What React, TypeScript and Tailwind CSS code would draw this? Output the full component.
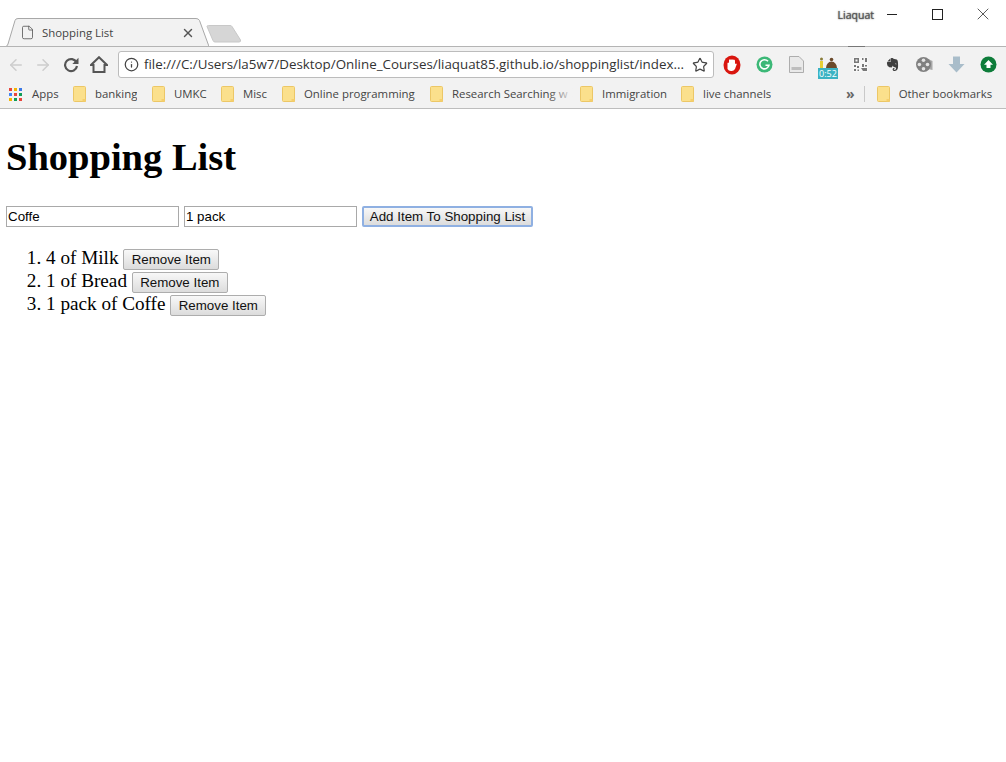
import { useState } from "react";
import { ArrowLeft, ArrowRight, Info, Star, X, File } from "lucide-react";
import { FaEvernote } from "react-icons/fa";

const bookmarks = [
  { label: "banking", width: "w-[79px]" },
  { label: "UMKC", width: "w-[69px]" },
  { label: "Misc", width: "w-[61px]" },
  { label: "Online programming", width: "w-[148px]" },
  { label: "Research Searching w", width: "w-[150px]", faded: true },
  { label: "Immigration", width: "w-[101px]" },
  { label: "live channels", width: "w-[169px]" },
];

const appColors = ["bg-[#e8453c]", "bg-[#f4b400]", "bg-[#3b78e7]", "bg-[#4285f4]", "bg-[#e8453c]", "bg-[#0f9d58]", "bg-[#f4b400]", "bg-[#0f9d58]", "bg-[#e8453c]"];

function Folder() {
  return (
    <svg width="13" height="16" viewBox="0 0 13 16" className="shrink-0">
      <path d="M0.5 1.5 Q0.5 0.5 1.5 0.5 H11.5 Q12.5 0.5 12.5 1.5 V15.5 H1.5 Q0.5 15.5 0.5 14.5 Z" fill="#fbe08c" stroke="#ecc766" />
      <path d="M9.5 13 H12.5 V15.5 H9.5 Z" fill="#f6cf6c" />
    </svg>
  );
}

function ExtensionIcons() {
  return (
    <div className="flex items-center">
      {/* opera-like blocker */}
      <div className="w-8 h-6 flex items-center justify-center">
        <svg width="18" height="20" viewBox="0 0 18 20">
          <ellipse cx="9" cy="10" rx="8.5" ry="9.5" fill="#d9160f" />
          <path d="M4.500 14 V8 Q5.200 6.800 6 8 V5 Q7 3.600 8 5 Q9 3.400 10 5 Q11 3.800 12 5.500 V9 Q13 8 13.800 9 L12 14 Q10.500 16.500 8 16 Q5.500 16 4.500 14 Z" fill="#fff" />
        </svg>
      </div>
      {/* grammarly */}
      <div className="w-8 h-6 flex items-center justify-center">
        <svg width="17" height="17" viewBox="0 0 17 17">
          <circle cx="8.5" cy="8.5" r="8" fill="#3cb877" />
          <path d="M12 5.3 A4.6 4.6 0 1 0 13 9.2 H9.5" fill="none" stroke="#fff" strokeWidth="1.6" />
        </svg>
      </div>
      {/* page */}
      <div className="w-8 h-6 flex items-center justify-center">
        <svg width="15" height="17" viewBox="0 0 15 17">
          <path d="M0.5 0.5 H10 L14.5 5 V16.5 H0.5 Z" fill="#e9e9e9" stroke="#adadad" />
          <path d="M2.5 11 H12.5 V14 H2.5 Z" fill="#bdbdbd" />
        </svg>
      </div>
      {/* timer with badge */}
      <div className="relative w-8 h-6 flex items-start justify-center">
        <svg width="20" height="11" viewBox="0 0 20 11" className="mt-[4px]">
          <rect x="2" y="4" width="3" height="7" fill="#e6cf35" />
          <circle cx="3.5" cy="2" r="1.5" fill="#8a7d3a" />
          <path d="M8 11 Q8.5 5 13.5 4.5 Q18.500 5 19 11 Z" fill="#6b4a2b" />
          <circle cx="13.500" cy="2.500" r="1.800" fill="#6b4a2b" />
        </svg>
        <span className="absolute left-[6px] top-[15px] w-[20px] h-[11px] bg-[#3bb3c3] text-white text-[9px] leading-[11px] text-center font-['Open_Sans',sans-serif]">0:52</span>
      </div>
      {/* qr code */}
      <div className="w-8 h-6 flex items-center justify-center">
        <svg width="15" height="15" viewBox="0 0 15 15">
          <rect width="15" height="15" fill="#f7f7f7" />
          <path d="M1 1 H6 V6 H1 Z M2.500 2.500 V4.500 H4.500 V2.500 Z M9 1 H10.500 V3 H9 Z M12 1 H14 V5 H12 Z M1 8 H3 V10 H1 Z M4 9 H6 V11 H4 Z M1 12 H3 V14 H1 Z M4.500 12.500 H6 V14 H4.500 Z M9 7 H11 V10 H9 Z M8 11 H14 V14 H10 Z M12 8 H14 V9.500 H12 Z" fill="#777" fillRule="evenodd" />
        </svg>
      </div>
      {/* evernote */}
      <div className="w-8 h-6 flex items-center justify-center text-[#3f3f3f]">
        <FaEvernote size={15} />
      </div>
      {/* film reel */}
      <div className="w-8 h-6 flex items-center justify-center">
        <svg width="17" height="17" viewBox="0 0 17 17">
          <path d="M12 3 L16.500 5 V14 L12 13 Z" fill="#a8a8a8" />
          <circle cx="7.500" cy="8.500" r="7.500" fill="#808080" />
          <circle cx="7.500" cy="4.200" r="1.800" fill="#e4e4e4" />
          <circle cx="7.500" cy="12.800" r="1.800" fill="#e4e4e4" />
          <circle cx="3.400" cy="8.500" r="1.800" fill="#e4e4e4" />
          <circle cx="11.500" cy="8.500" r="1.800" fill="#e4e4e4" />
        </svg>
      </div>
      {/* download */}
      <div className="w-8 h-6 flex items-center justify-center">
        <svg width="17" height="17" viewBox="0 0 17 17">
          <path d="M5 0.500 H12 V8 H16.500 L8.500 16.500 L0.500 8 H5 Z" fill="#a9bdca" />
        </svg>
      </div>
      {/* green update */}
      <div className="w-8 h-6 flex items-center justify-center">
        <svg width="17" height="17" viewBox="0 0 17 17">
          <circle cx="8.500" cy="8.500" r="8" fill="#0e7c3a" />
          <path d="M8.500 4 L13 8.700 H10.500 V12 H6.500 V8.700 H4 Z" fill="#fff" />
        </svg>
      </div>
    </div>
  );
}

function BrowserChrome() {
  return (
    <div className="font-['Open_Sans',sans-serif]">
      {/* tab strip */}
      <div className="relative h-[46px] bg-white flex items-start">
        <div className="relative mt-[18px] ml-[5px] w-[204px] h-[29px] flex items-center text-[11.4px] text-[#444]">
          <svg width="204" height="29" viewBox="0 0 204 29" className="absolute left-0 top-0">
            <path d="M0 28.500 H1 Q2 28.500 3 26 L10 2.500 Q10.500 0.500 13 0.500 H191 Q193.500 0.500 194.500 2.500 L204 28.500" fill="#f2f2f2" stroke="#a8a8a8" />
          </svg>
          <File size={15} strokeWidth={1.3} className="relative ml-[15px] text-[#555]" />
          <span className="relative ml-[7px]">Shopping List</span>
          <X size={14} strokeWidth={2.4} className="relative ml-[68px] text-[#555]" />
        </div>
        <svg width="36" height="18" viewBox="0 0 36 18" className="mt-[25px] ml-[-3px]">
          <path d="M1 1.500 Q1 0.500 2.500 0.500 H24 Q25.500 0.500 26 1.500 L34.500 15 Q35 17 33 17 H9 Q7.500 17 7 15.500 Z" fill="#d6d6d6" stroke="#c8c8c8" />
        </svg>
        <div className="ml-auto mr-[13px] mt-[4px] flex items-center h-[20px]">
          <span className="mt-[3px] text-[10.500px] text-[#555] mr-[13px] [text-shadow:0_0_1px_#666,0_0_2px_#999]">Liaquat</span>
          <div className="w-[10px] h-px bg-[#222]" />
          <div className="w-[11px] h-[11px] border border-[#222] ml-[35px]" />
          <X size={20} strokeWidth={0.9} className="ml-[30px] text-[#222]" />
        </div>
      </div>

      {/* toolbar */}
      <div className="relative h-[34px] bg-[#f2f2f2] border-t border-[#b4b4b4] flex items-center pt-[2px]">
        <div className="absolute left-[848px] top-[-1px] w-[17px] h-px bg-[#777]" />
        <ArrowLeft size={18} strokeWidth={2} className="ml-[7px] text-[#cdcdcd]" />
        <ArrowRight size={18} strokeWidth={2} className="ml-[9px] text-[#cdcdcd]" />
        <svg width="16" height="16" viewBox="0 0 16 16" className="ml-[11px]">
          <path d="M13.500 5.500 A6 6 0 1 0 14 9" fill="none" stroke="#555" strokeWidth="2.200" />
          <path d="M15.500 0.800 V7 H9.300 Z" fill="#555" />
        </svg>
        <svg width="18" height="17" viewBox="0 0 18 17" className="ml-[11px]">
          <path d="M9 1.200 L17 9 H14.500 V16 H3.500 V9 H1 Z" fill="none" stroke="#555" strokeWidth="2" strokeLinejoin="miter" />
        </svg>
        <div className="ml-[10px] w-[596px] h-[27px] bg-white border border-[#bcbcbc] rounded-[3px] flex items-center">
          <Info size={15} strokeWidth={2} className="ml-[5px] shrink-0 text-[#444]" />
          <span className="ml-[5px] text-[13.350px] text-[#333] whitespace-nowrap w-[548px]">file:///C:/Users/la5w7/Desktop/Online_Courses/liaquat85.github.io/shoppinglist/index...</span>
          <Star size={16} strokeWidth={1.800} className="shrink-0 text-[#444]" />
        </div>
        <div className="ml-[2px]">
          <ExtensionIcons />
        </div>
      </div>

      {/* bookmarks bar */}
      <div className="h-[29px] bg-[#f2f2f2] border-b border-[#bdbdbd] flex items-center text-[11.4px] text-[#444]">
        <div className="ml-[9px] w-[13px] h-[13px] grid grid-cols-3 gap-[2px]">
          {appColors.map((c, i) => (
            <div key={i} className={c} />
          ))}
        </div>
        <span className="ml-[10px] w-[41px]">Apps</span>
        {bookmarks.map((b) => (
          <div key={b.label} className={`relative flex items-center gap-[9px] ${b.width}`}>
            <Folder />
            <span className="whitespace-nowrap overflow-hidden">{b.label}</span>
            {b.faded && <div className="absolute left-[118px] top-0 w-[26px] h-full bg-gradient-to-r from-transparent to-[#f2f2f2]" />}
          </div>
        ))}
        <span className="ml-[-4px] text-[14px] leading-none text-[#666] font-bold">»</span>
        <div className="ml-[9px] w-px h-[16px] bg-[#c9c9c9]" />
        <div className="ml-[12px] flex items-center gap-[9px]">
          <Folder />
          <span className="whitespace-nowrap">Other bookmarks</span>
        </div>
      </div>
    </div>
  );
}

export default function App() {
  const [name, setName] = useState("Coffe");
  const [quantity, setQuantity] = useState("1 pack");
  const [items, setItems] = useState(["4 of Milk", "1 of Bread", "1 pack of Coffe"]);

  const inputClass = "w-[173px] h-[21px] border border-[#a9a9a9] px-[1px] text-[13.33px] text-black font-['Liberation_Sans',sans-serif] outline-none";
  const buttonClass = "h-[21px] rounded-[2px] bg-gradient-to-b from-[#f8f8f8] to-[#dcdcdc] text-[13.33px] leading-none text-[#111] font-['Liberation_Sans',sans-serif]";

  return (
    <div className="min-h-[762px] bg-white">
      <BrowserChrome />
      <div className="px-[6px] font-['Liberation_Serif',serif] text-black">
        <h1 className="mt-[28px] text-[38.5px] leading-[41px] font-bold">Shopping List</h1>
        <form
          className="mt-[28px] flex gap-[5px]"
          onSubmit={(e) => {
            e.preventDefault();
            setItems([...items, `${quantity} of ${name}`]);
          }}
        >
          <input className={inputClass} value={name} onChange={(e) => setName(e.target.value)} />
          <input className={inputClass} value={quantity} onChange={(e) => setQuantity(e.target.value)} />
          <button type="submit" className={`${buttonClass} w-[171px] border-2 border-[#8fb0e2]`}>
            Add Item To Shopping List
          </button>
        </form>
        <ol className="mt-[19px] pl-[40px] list-decimal text-[19.2px] leading-[23px]">
          {items.map((item, i) => (
            <li key={i} className="h-[23px]">
              {item}{" "}
              <button type="button" className={`${buttonClass} w-[96px] border border-[#adadad]`} onClick={() => setItems(items.filter((_, j) => j !== i))}>
                Remove Item
              </button>
            </li>
          ))}
        </ol>
      </div>
    </div>
  );
}
